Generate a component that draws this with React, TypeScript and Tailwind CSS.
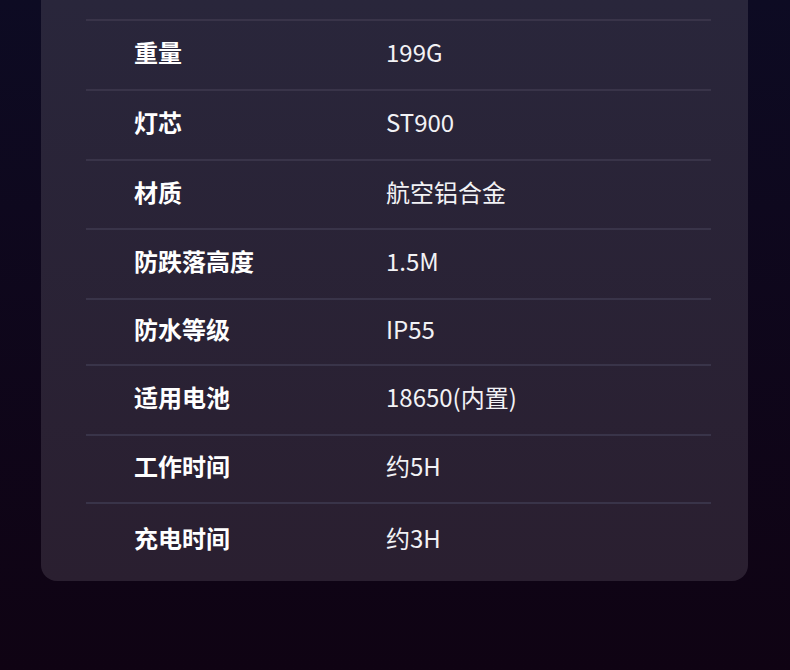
const specs = [
  { label: "重量", value: "199G", h: "h-[70px]" },
  { label: "灯芯", value: "ST900", h: "h-[70px]" },
  { label: "材质", value: "航空铝合金", h: "h-[69px]" },
  { label: "防跌落高度", value: "1.5M", h: "h-[70px]" },
  { label: "防水等级", value: "IP55", h: "h-[66px]" },
  { label: "适用电池", value: "18650(内置)", h: "h-[70px]" },
  { label: "工作时间", value: "约5H", h: "h-[68px]" },
  { label: "充电时间", value: "约3H", h: "h-[79px]" },
];

export default function App() {
  return (
    <div
      className="h-[670px] w-[790px] overflow-hidden bg-gradient-to-b from-[#0d0b23] to-[#0f0313] px-[41px]"
      style={{ fontFamily: '"Noto Sans CJK SC", "Noto Sans", sans-serif' }}
    >
      <section className="w-[707px] rounded-b-[16px] bg-gradient-to-b from-[#29263b] to-[#2a1f30] pt-[19px] pl-[45px] pr-[37px]">
        {specs.map((row, i) => (
          <div
            key={row.label}
            className={`flex items-center border-t-2 border-[#393449] ${row.h} ${i === specs.length - 1 ? "pb-[9px]" : "pb-[6px]"}`}
          >
            <span className="w-[300px] shrink-0 pl-[48px] text-[24px] font-bold text-white">
              {row.label}
            </span>
            <span className="text-[24px] text-[#f2f2f5]">{row.value}</span>
          </div>
        ))}
      </section>
    </div>
  );
}
